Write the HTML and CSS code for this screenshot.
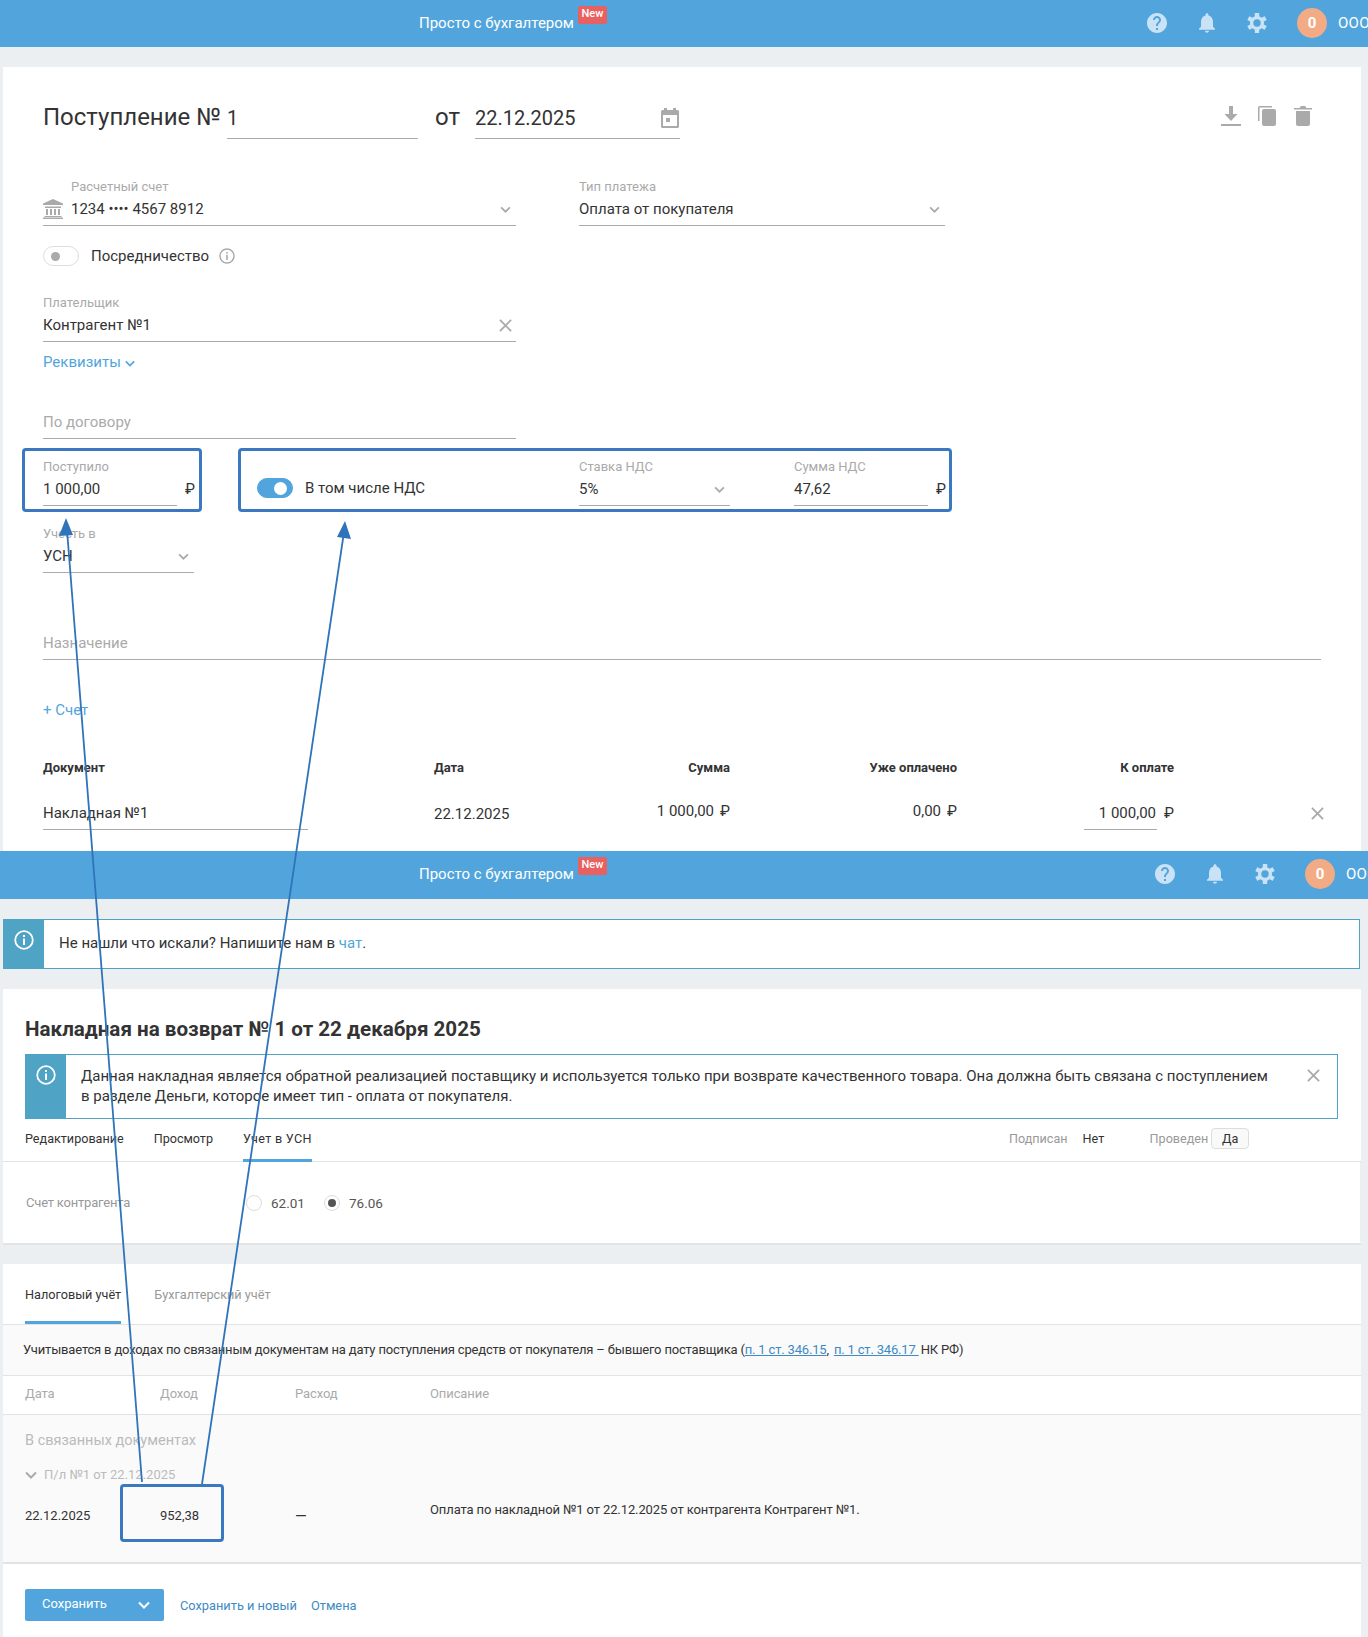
FILE: index.html
```html
<!DOCTYPE html>
<html lang="ru">
<head>
<meta charset="utf-8">
<title>Поступление и накладная на возврат</title>
<link rel="stylesheet" href="styles.css">
</head>
<body>
<svg class="defs" aria-hidden="true">
  <symbol id="i-help" viewBox="2 2 20 20"><path d="M12 2C6.48 2 2 6.48 2 12s4.48 10 10 10 10-4.48 10-10S17.52 2 12 2zm1 17h-2v-2h2v2zm2.07-7.75l-.9.92C13.45 12.9 13 13.5 13 15h-2v-.5c0-1.1.45-2.1 1.17-2.83l1.24-1.26c.37-.36.59-.86.59-1.41 0-1.1-.9-2-2-2s-2 .9-2 2H8c0-2.21 1.79-4 4-4s4 1.79 4 4c0 .88-.36 1.68-.93 2.25z"/></symbol>
  <symbol id="i-bell" viewBox="4 2.5 16 19.5"><path d="M12 22c1.1 0 2-.9 2-2h-4c0 1.1.9 2 2 2zm6-6v-5c0-3.07-1.63-5.64-4.5-6.32V4c0-.83-.67-1.5-1.5-1.5s-1.5.67-1.5 1.5v.68C7.64 5.36 6 7.92 6 11v5l-2 2v1h16v-1l-2-2z"/></symbol>
  <symbol id="i-gear" viewBox="0 0 20 20"><circle cx="10" cy="10" r="5.400" fill="none" stroke="currentColor" stroke-width="3.400"/><g fill="currentColor"><rect x="7.800" y="0" width="4.400" height="4" rx=".6"/><rect x="7.800" y="16" width="4.400" height="4" rx=".6"/><rect x="7.800" y="0" width="4.400" height="4" rx=".6" transform="rotate(60 10 10)"/><rect x="7.800" y="0" width="4.400" height="4" rx=".6" transform="rotate(120 10 10)"/><rect x="7.800" y="0" width="4.400" height="4" rx=".6" transform="rotate(240 10 10)"/><rect x="7.800" y="0" width="4.400" height="4" rx=".6" transform="rotate(300 10 10)"/></g></symbol>
  <symbol id="i-chev" viewBox="0 0 12 8"><path d="M1 1.500l5 5 5-5" fill="none" stroke="currentColor" stroke-width="2"/></symbol>
  <symbol id="i-x" viewBox="0 0 14 14"><path d="M1 1l12 12M13 1L1 13" fill="none" stroke="currentColor" stroke-width="2"/></symbol>
  <symbol id="i-info" viewBox="0 0 20 20"><circle cx="10" cy="10" r="8.800" fill="none" stroke="currentColor" stroke-width="1.800"/><rect x="9" y="8.500" width="2" height="6.500" fill="currentColor"/><rect x="9" y="5" width="2" height="2" fill="currentColor"/></symbol>
</svg>

<div class="page">
  <header class="topbar topbar-short">
    <span class="brand">Просто с бухгалтером</span><span class="badge">New</span>
    <div class="top-right">
      <svg class="ti ti-help"><use href="#i-help"/></svg>
      <svg class="ti ti-bell"><use href="#i-bell"/></svg>
      <svg class="ti ti-gear"><use href="#i-gear"/></svg>
      <span class="avatar">0</span><span class="org">ООО</span>
    </div>
  </header>

  <section class="card card-form">
    <div class="title-row">
      <span class="title-text">Поступление №</span>
      <span class="title-num">1</span>
      <span class="title-from">от</span>
      <span class="title-date">22.12.2025
        <svg class="cal" viewBox="0 0 18 20"><path d="M3 0h3v2h6V0h3v2h1.500A1.500 1.500 0 0 1 18 3.500V18.500A1.500 1.500 0 0 1 16.500 20h-15A1.500 1.500 0 0 1 0 18.500V3.500A1.500 1.500 0 0 1 1.500 2H3zM2 7v11h14V7zM5 10h4v4H5z" fill-rule="evenodd"/></svg>
      </span>
      <div class="doc-actions">
        <svg class="da" viewBox="0 0 20 20"><path d="M8 0h4v8h4.500L10 15 3.500 8H8zM0 18h20v2H0z"/></svg>
        <svg class="da da-copy" viewBox="0 0 18 20"><path d="M1.500 0H14v1.500H1.500V15H0V1.500A1.500 1.500 0 0 1 1.500 0z"/><rect x="4" y="3" width="14" height="17" rx="2"/></svg>
        <svg class="da da-trash" viewBox="0 0 18 20"><path d="M2 5h14v13a2 2 0 0 1-2 2H4a2 2 0 0 1-2-2zM0 2h5.500L7 0h4l1.500 2H18v1.500H0z"/></svg>
      </div>
    </div>

    <div class="row-two">
      <div class="field f-account">
        <div class="lbl lbl-in">Расчетный счет</div>
        <div class="ctl">
          <svg class="bank" viewBox="0 0 20 20"><path d="M10 0l10 4.500V6H0V4.500zM2 7.500h16V9H2zM3 10h2v6H3zM7 10h2v6H7zM11 10h2v6h-2zM15 10h2v6h-2zM1.500 17h17v1h-17zM0 18.500h20V20H0z"/></svg>
          <span class="val">1234 •••• 4567 8912</span>
          <svg class="chev"><use href="#i-chev"/></svg>
        </div>
      </div>
      <div class="field f-type">
        <div class="lbl">Тип платежа</div>
        <div class="ctl"><span class="val">Оплата от покупателя</span><svg class="chev"><use href="#i-chev"/></svg></div>
      </div>
    </div>

    <div class="toggle-row">
      <span class="switch"><i class="knob"></i></span>
      <span class="toggle-label">Посредничество</span>
      <svg class="info-mini"><use href="#i-info"/></svg>
    </div>

    <div class="field f-payer">
      <div class="lbl">Плательщик</div>
      <div class="ctl"><span class="val">Контрагент №1</span><svg class="xmark"><use href="#i-x"/></svg></div>
    </div>

    <a class="link-req">Реквизиты <svg class="chev-blue"><use href="#i-chev"/></svg></a>

    <div class="field f-contract">
      <div class="ctl"><span class="ph">По договору</span></div>
    </div>

    <div class="boxes">
      <div class="hl hl-sum">
        <div class="field f-sum">
          <div class="lbl">Поступило</div>
          <div class="ctl"><span class="val">1 000,00</span></div>
        </div>
        <span class="rub">₽</span>
      </div>
      <div class="hl hl-nds">
        <span class="switch switch-on"><i class="knob"></i></span>
        <span class="nds-label">В том числе НДС</span>
        <div class="field f-rate">
          <div class="lbl">Ставка НДС</div>
          <div class="ctl"><span class="val">5%</span><svg class="chev"><use href="#i-chev"/></svg></div>
        </div>
        <div class="field f-ndssum">
          <div class="lbl">Сумма НДС</div>
          <div class="ctl"><span class="val">47,62</span></div>
        </div>
        <span class="rub">₽</span>
      </div>
    </div>

    <div class="field f-usn">
      <div class="lbl">Учесть в</div>
      <div class="ctl"><span class="val">УСН</span><svg class="chev"><use href="#i-chev"/></svg></div>
    </div>

    <div class="field f-purpose">
      <div class="ctl"><span class="ph">Назначение</span></div>
    </div>

    <a class="link-bill">+ Счет</a>

    <div class="doc-table">
      <div class="th">Документ</div>
      <div class="th">Дата</div>
      <div class="th th-r">Сумма</div>
      <div class="th th-r">Уже оплачено</div>
      <div class="th th-r">К оплате</div>
      <div class="th"></div>
      <div class="td"><div class="td-doc">Накладная №1</div></div>
      <div class="td td-date">22.12.2025</div>
      <div class="td td-r td-up">1 000,00<span class="td-rub">₽</span></div>
      <div class="td td-r td-up">0,00<span class="td-rub">₽</span></div>
      <div class="td td-r"><span class="td-pay">1 000,00</span><span class="td-rub">₽</span></div>
      <div class="td td-x"><svg class="xmark"><use href="#i-x"/></svg></div>
    </div>
  </section>

  <header class="topbar">
    <span class="brand">Просто с бухгалтером</span><span class="badge">New</span>
    <div class="top-right top-right-narrow">
      <svg class="ti ti-help"><use href="#i-help"/></svg>
      <svg class="ti ti-bell"><use href="#i-bell"/></svg>
      <svg class="ti ti-gear"><use href="#i-gear"/></svg>
      <span class="avatar">0</span><span class="org">ООО</span>
    </div>
  </header>

  <div class="notice notice-chat">
    <div class="notice-side"><svg class="notice-ic"><use href="#i-info"/></svg></div>
    <div class="notice-text">Не нашли что искали? Напишите нам в <a class="lnk">чат</a>.</div>
  </div>

  <section class="card card-doc">
    <h1 class="doc-title">Накладная на возврат № 1 от 22 декабря 2025</h1>
    <div class="notice notice-doc">
      <div class="notice-side"><svg class="notice-ic"><use href="#i-info"/></svg></div>
      <div class="notice-text">Данная накладная является обратной реализацией поставщику и используется только при возврате качественного товара. Она должна быть связана с поступлением<br>в разделе Деньги, которое имеет тип - оплата от покупателя.</div>
      <svg class="xmark notice-x"><use href="#i-x"/></svg>
    </div>
    <div class="tabs">
      <span class="tab">Редактирование</span>
      <span class="tab">Просмотр</span>
      <span class="tab tab-on">Учет в УСН</span>
      <div class="status">
        <span class="st-l">Подписан</span><span class="st-v">Нет</span>
        <span class="st-l st-l2">Проведен</span><span class="st-b">Да</span>
      </div>
    </div>
    <div class="acc-row">
      <span class="acc-l">Счет контрагента</span>
      <span class="radio"></span><span class="radio-t">62.01</span>
      <span class="radio radio-on"></span><span class="radio-t">76.06</span>
    </div>
  </section>

  <section class="card card-tax">
    <div class="tax-tabs">
      <span class="ttab ttab-on">Налоговый учёт</span>
      <span class="ttab">Бухгалтерский учёт</span>
    </div>
    <div class="tax-note">Учитывается в доходах по связанным документам на дату поступления средств от покупателя – бывшего поставщика (<a class="ul">п. 1 ст. 346.15</a>, <a class="ul ul-2">п. 1 ст. 346.17 </a>НК РФ)</div>
    <div class="tax-head tax-grid">
      <span>Дата</span><span>Доход</span><span>Расход</span><span>Описание</span>
    </div>
    <div class="tax-body">
      <div class="tax-group">В связанных документах</div>
      <div class="tax-sub"><svg class="sub-chev"><use href="#i-chev"/></svg>П/л №1 от 22.12.2025</div>
      <div class="tax-row tax-grid">
        <span>22.12.2025</span><span>952,38</span><span class="tax-dash">—</span><span class="tax-desc">Оплата по накладной №1 от 22.12.2025 от контрагента Контрагент №1.</span>
      </div>
    </div>
    <div class="footer-bar">
      <span class="save-btn"><span class="save-main">Сохранить</span><svg class="save-chev"><use href="#i-chev"/></svg></span>
      <a class="foot-link foot-1">Сохранить и новый</a>
      <a class="foot-link">Отмена</a>
    </div>
  </section>

  <div class="hl-abs"></div>
  <svg class="arrows" viewBox="0 0 1368 1637">
    <line x1="142" y1="1482" x2="67" y2="530"/>
    <line x1="202" y1="1484" x2="344" y2="532"/>
    <polygon points="66,518 59,536 73,535"/>
    <polygon points="345,521 337,537 351,539"/>
  </svg>
</div>
</body>
</html>
```
FILE: styles.css
```css
* { box-sizing: border-box; }
html, body { margin: 0; padding: 0; }
body { background: #ebeff2; font-family: Roboto, "Liberation Sans", sans-serif; color: #333; font-size: 15px; }
.defs { display: none; }
.page { position: relative; width: 1368px; height: 1637px; overflow: hidden; }

.topbar { display: flex; height: 48px; background: #52a5dc; color: #fff; padding: 0 0 2px 419px; align-items: center; overflow: hidden; }
.topbar-short { height: 47px; }
.brand { font-size: 15px; width: 159px; white-space: nowrap; }
.badge { align-self: flex-start; margin-top: 6px; background: #e86060; color: #fff; font-size: 11px; font-weight: 500; width: 29px; height: 18px; line-height: 16px; text-align: center; border-radius: 2px; }
.top-right { margin-left: auto; width: 221px; flex: none; display: flex; align-items: center; }
.top-right-narrow { width: 213px; }
.ti { fill: #c9e2f6; color: #c9e2f6; flex: none; }
.ti-help { width: 20px; height: 20px; }
.ti-bell { width: 16px; height: 20px; margin-left: 32px; }
.ti-gear { width: 20px; height: 20px; margin-left: 32px; }
.avatar { width: 30px; height: 30px; border-radius: 50%; background: #f2ab85; color: #fff; font-weight: 700; font-size: 15px; line-height: 30px; text-align: center; margin-left: 30px; flex: none; }
.org { margin-left: 11px; font-size: 15px; letter-spacing: .3px; white-space: nowrap; }

.card { background: #fff; margin-left: 3px; width: 1358px; }
.card-form { margin-top: 20px; padding: 33px 40px 0; height: 784px; }

.title-row { display: flex; align-items: flex-start; height: 39px; color: #333; }
.title-text { font-size: 24px; width: 184px; line-height: 34px; }
.title-num { width: 191px; height: 39px; border-bottom: 1px solid #aaa; font-size: 20px; line-height: 36px; }
.title-from { font-size: 24px; margin-left: 17px; width: 40px; line-height: 34px; }
.title-date { width: 205px; height: 39px; border-bottom: 1px solid #aaa; font-size: 20px; line-height: 36px; display: flex; justify-content: space-between; align-items: flex-start; }
.cal { width: 18px; height: 20px; fill: #aaa; margin: 8px 1px 0 0; }
.doc-actions { margin-left: auto; margin-right: 9px; display: flex; align-items: flex-start; margin-top: 6px; }
.da { width: 20px; height: 20px; fill: #aaa; }
.da-copy { width: 18px; margin-left: 17px; }
.da-trash { width: 18px; margin-left: 18px; }

.field { display: block; }
.lbl { font-size: 13px; line-height: 16px; height: 16px; color: #aaa; white-space: nowrap; }
.lbl-in { padding-left: 28px; }
.ctl { display: flex; align-items: center; height: 31px; padding-bottom: 2px; border-bottom: 1px solid #aaa; font-size: 15px; color: #333; }
.val { white-space: nowrap; }
.ph { color: #aaa; font-size: 15px; }
.chev { width: 11px; height: 7px; color: #aaa; margin-left: auto; margin-right: 5px; flex: none; }
.xmark { width: 13px; height: 13px; color: #aaa; margin-left: auto; margin-right: 4px; flex: none; }

.row-two { display: flex; margin-top: 40px; }
.f-account { width: 473px; }
.bank { width: 20px; height: 20px; fill: #aaa; margin-right: 8px; flex: none; }
.f-type { width: 366px; margin-left: 63px; }

.toggle-row { display: flex; align-items: center; height: 20px; margin-top: 20px; }
.switch { width: 36px; height: 20px; border-radius: 10px; border: 1px solid #ddd; background: #fff; display: flex; align-items: center; padding-left: 7px; flex: none; }
.knob { width: 9px; height: 9px; border-radius: 50%; background: #aaa; display: block; }
.toggle-label { margin-left: 12px; font-size: 15px; line-height: 20px; }
.info-mini { width: 16px; height: 16px; color: #aaa; margin-left: 10px; }

.f-payer { width: 473px; margin-top: 29px; }
.link-req { display: block; color: #52a5dc; font-size: 15px; line-height: 18px; margin-top: 11px; }
.chev-blue { width: 10px; height: 7px; color: #52a5dc; }
.f-contract { width: 473px; margin-top: 36px; }
.f-contract .ctl { height: 32px; }

.boxes { display: flex; margin: 9px 0 0 -21px; }
.hl { height: 64px; border: 3px solid #3a78c0; border-radius: 4px; display: flex; align-items: flex-start; padding-top: 8px; background: #fff; }
.hl-sum { width: 180px; padding-left: 18px; }
.f-sum { width: 134px; }
.rub { font-size: 15px; line-height: 28px; margin-top: 16px; color: #333; }
.hl-sum .rub { margin-left: 8px; }
.hl-nds { width: 714px; margin-left: 36px; padding-left: 16px; }
.switch-on { background: #52a5dc; border-color: #52a5dc; padding-left: 0; justify-content: flex-end; padding-right: 5px; margin-top: 19px; }
.switch-on .knob { background: #fff; width: 13px; height: 13px; }
.nds-label { margin-left: 12px; width: 274px; margin-top: 17px; line-height: 24px; font-size: 15px; }
.f-rate { width: 151px; }
.f-ndssum { width: 134px; margin-left: 64px; }
.hl-nds .rub { margin-left: 8px; }

.f-usn { width: 151px; margin-top: 14px; }
.f-purpose { margin-top: 54px; }
.f-purpose .ctl { height: 33px; padding-bottom: 0; }
.link-bill { display: block; color: #52a5dc; font-size: 15px; line-height: 18px; margin-top: 41px; }

.doc-table { display: grid; grid-template-columns: 391px 150px 146px 227px 217px 1fr; grid-template-rows: 18px 53px; margin-top: 40px; }
.th { font-size: 13px; font-weight: 700; line-height: 18px; color: #333; }
.th-r { text-align: right; }
.td { font-size: 15px; align-self: end; height: 33px; }
.td-doc { width: 265px; height: 33px; border-bottom: 1px solid #aaa; line-height: 32px; }
.td-date { line-height: 34px; }
.td-r { text-align: right; white-space: nowrap; line-height: 32px; }
.td-up { line-height: 28px; }
.td-pay { display: inline-block; width: 73px; height: 33px; border-bottom: 1px solid #aaa; text-align: right; vertical-align: top; padding-right: 1px; }
.td-rub { margin-left: 6px; }
.td-pay + .td-rub { margin-left: 7px; }
.td-x { display: flex; align-items: center; justify-content: flex-end; }
.td-x .xmark { margin: 0 -3px 0 0; }

.notice { display: flex; background: #fff; border: 1px solid #4fa3c4; }
.notice-chat { margin: 20px 0 0 3px; width: 1357px; height: 50px; }
.notice-side { width: 41px; background: #4fa3c4; flex: none; margin: -1px 0 -1px -1px; padding: 11px 0 0 11px; }
.notice-ic { width: 20px; height: 20px; color: #fff; display: block; }
.notice-text { font-size: 15px; color: #333; }
.notice-chat .notice-text { padding: 13px 0 0 15px; line-height: 20px; }
.lnk { color: #52a5dc; }

.card-doc { margin-top: 20px; height: 256px; border-bottom: 2px solid #e3e3e3; padding-top: 27px; }
.doc-title { margin: 0 0 0 22px; font-size: 20.600px; font-weight: 700; line-height: 26px; color: #333; white-space: nowrap; }
.notice-doc { margin: 12px 0 0 22px; width: 1313px; height: 65px; position: relative; }
.notice-doc .notice-text { padding: 11px 0 0 15px; line-height: 20px; white-space: nowrap; }
.notice-x { position: absolute; top: 14px; right: 17px; margin: 0; }
.tabs { display: flex; align-items: flex-start; height: 43px; padding-left: 22px; border-bottom: 1px solid #e3e3e3; font-size: 12.600px; position: relative; }
.tab { height: 43px; line-height: 40px; margin-right: 30px; padding-bottom: 3px; white-space: nowrap; }
.tab-on { border-bottom: 3px solid #52a5dc; letter-spacing: .3px; }
.status { position: absolute; left: 1006px; top: 7px; display: flex; align-items: center; height: 24px; }
.st-l { color: #999; white-space: nowrap; }
.st-v { margin-left: 15px; width: 38px; }
.st-l2 { margin-left: 29px; }
.st-b { margin-left: 3px; width: 38px; height: 21px; line-height: 19px; text-align: center; border: 1px solid #ddd; border-radius: 4px; background: #f9f9f9; }
.acc-row { display: flex; align-items: center; height: 80px; border-right: 1px solid #eee; padding-left: 23px; font-size: 13px; }
.acc-l { width: 220px; color: #999; letter-spacing: -.2px; }
.radio { width: 16px; height: 16px; border-radius: 50%; border: 1px solid #ddd; background: #fff; flex: none; display: flex; align-items: center; justify-content: center; margin-top: 2px; }
.radio-on::after { content: ""; width: 8px; height: 8px; border-radius: 50%; background: #555; }
.radio-t { margin: 2px 0 0 9px; width: 53px; font-size: 13.500px; color: #555; }

.card-tax { margin-top: 19px; height: 373px; background: #fff; }
.tax-tabs { height: 61px; border-bottom: 1px solid #e3e3e3; padding-left: 22px; display: flex; }
.ttab { font-size: 12.700px; line-height: 62px; height: 60px; margin-right: 33px; color: #999; white-space: nowrap; }
.ttab-on { color: #333; border-bottom: 3px solid #52a5dc; }
.tax-note { height: 51px; background: #fafafa; border-bottom: 1px solid #e3e3e3; padding-left: 20px; font-size: 13px; line-height: 50px; white-space: nowrap; color: #333; letter-spacing: -.175px; }
.ul { color: #3d8ac4; text-decoration: underline; }
.ul-2 { margin-left: 2px; padding-right: 2px; }
.tax-grid { display: grid; grid-template-columns: 135px 135px 135px 1fr; padding-left: 22px; }
.tax-head { height: 39px; border-bottom: 1px solid #e3e3e3; font-size: 13px; color: #aaa; line-height: 36px; letter-spacing: -.1px; }
.tax-body { height: 149px; background: #fafafa; border-bottom: 2px solid #e3e3e3; padding-top: 17px; }
.tax-group { padding-left: 22px; font-size: 14.500px; line-height: 18px; color: #bbb; }
.tax-sub { padding-left: 22px; font-size: 13px; line-height: 18px; color: #bbb; margin-top: 16px; display: flex; align-items: center; }
.sub-chev { width: 12px; height: 8px; color: #aaa; margin-right: 7px; }
.tax-row { font-size: 13px; line-height: 20px; margin-top: 22px; color: #333; }
.tax-dash { font-size: 15px; }
.tax-desc { margin-top: -6px; letter-spacing: -.11px; }
.footer-bar { display: flex; align-items: flex-start; padding: 25px 0 0 22px; }
.save-btn { width: 139px; height: 32px; background: #52a5dc; border-radius: 2px; color: #fff; font-size: 13px; display: flex; align-items: center; padding: 0 0 4px 17px; }
.save-main { flex: 1; }
.save-chev { width: 12px; height: 8px; color: #fff; margin-right: 14px; margin-top: 4px; }
.foot-link { color: #3d8ac4; font-size: 12.800px; line-height: 20px; margin-top: 7px; margin-left: 14px; white-space: nowrap; }
.foot-1 { margin-left: 16px; }

.hl-abs { position: absolute; left: 120px; top: 1484px; width: 104px; height: 58px; border: 3px solid #3a78c0; border-radius: 4px; }
.arrows { position: absolute; left: 0; top: 0; width: 1368px; height: 1637px; pointer-events: none; }
.arrows line { stroke: #2f74ba; stroke-width: 1.800; }
.arrows polygon { fill: #2f74ba; }
```
